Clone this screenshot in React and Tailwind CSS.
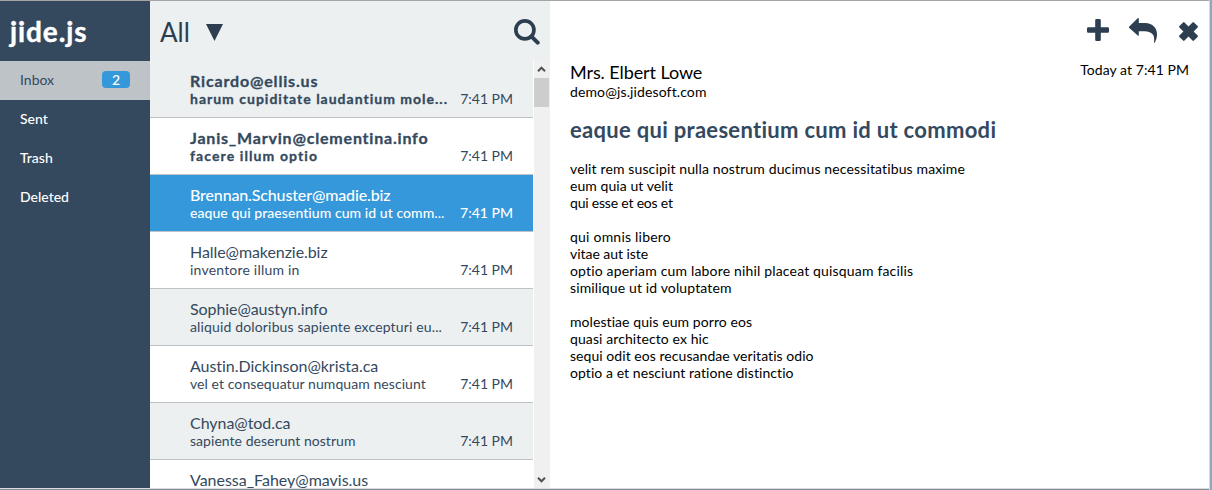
const folders = ['Sent', 'Trash', 'Deleted'];

const messages = [
  { from: 'Ricardo@ellis.us', fromTracking: 'tracking-[0.83px]', subject: 'harum cupiditate laudantium mole...', subjectTracking: 'tracking-[1px]', kind: 'unread', bg: 'bg-[#ecf0f1]' },
  { from: 'Janis_Marvin@clementina.info', fromTracking: 'tracking-[0.8px]', subject: 'facere illum optio', subjectTracking: 'tracking-[1.1px]', kind: 'unread', bg: 'bg-white' },
  { from: 'Brennan.Schuster@madie.biz', fromTracking: 'tracking-[-0.14px]', subject: 'eaque qui praesentium cum id ut comm...', subjectTracking: 'tracking-[0.06px]', kind: 'selected', bg: 'bg-[#3498db]' },
  { from: 'Halle@makenzie.biz', fromTracking: 'tracking-[-0.07px]', subject: 'inventore illum in', subjectTracking: 'tracking-[0.2px]', kind: 'read', bg: 'bg-white' },
  { from: 'Sophie@austyn.info', fromTracking: 'tracking-[-0.08px]', subject: 'aliquid doloribus sapiente excepturi eu...', subjectTracking: 'tracking-[0.15px]', kind: 'read', bg: 'bg-[#ecf0f1]' },
  { from: 'Austin.Dickinson@krista.ca', fromTracking: 'tracking-[-0.04px]', subject: 'vel et consequatur numquam nesciunt', subjectTracking: 'tracking-[0.07px]', kind: 'read', bg: 'bg-white' },
  { from: 'Chyna@tod.ca', fromTracking: 'tracking-[-0.05px]', subject: 'sapiente deserunt nostrum', subjectTracking: 'tracking-[0.04px]', kind: 'read', bg: 'bg-[#ecf0f1]' },
  { from: 'Vanessa_Fahey@mavis.us', fromTracking: 'tracking-[-0.01px]', kind: 'read', bg: 'bg-white' },
];

const kinds = {
  unread: { row: 'text-[#34495e]', weight: 'font-bold [-webkit-text-stroke:0.3px_#34495e]', time: '' },
  selected: { row: 'text-white', weight: 'font-medium', time: 'font-medium' },
  read: { row: 'text-[#34495e]', weight: '', time: '' },
};

const paragraphs = [
  [
    ['velit rem suscipit nulla nostrum ducimus necessitatibus maxime', 'tracking-[0.13px]'],
    ['eum quia ut velit', 'tracking-[0.06px]'],
    ['qui esse et eos et', 'tracking-[-0.2px]'],
  ],
  [
    ['qui omnis libero', 'tracking-[0.22px]'],
    ['vitae aut iste', 'tracking-[-0.04px]'],
    ['optio aperiam cum labore nihil placeat quisquam facilis', 'tracking-[0.17px]'],
    ['similique ut id voluptatem', 'tracking-[0.14px]'],
  ],
  [
    ['molestiae quis eum porro eos', 'tracking-[0.07px]'],
    ['quasi architecto ex hic', 'tracking-[0.1px]'],
    ['sequi odit eos recusandae veritatis odio', 'tracking-[0.05px]'],
    ['optio a et nesciunt ratione distinctio', 'tracking-[0.07px]'],
  ],
];

function Message({ message }) {
  const style = kinds[message.kind];
  return (
    <li className={`flex h-[57px] shrink-0 items-end justify-between border-b border-[#bdc3c7] py-[10px] pr-5 pl-10 ${style.row} ${message.bg}`}>
      <div className={`h-9 whitespace-nowrap ${style.weight}`}>
        <div className={`text-[16px] leading-[19px] ${message.fromTracking}`}>{message.from}</div>
        {message.subject && <div className={`text-[14px] leading-[17px] ${message.subjectTracking}`}>{message.subject}</div>}
      </div>
      {message.subject && <div className={`text-[14px] leading-[17px] whitespace-nowrap ${style.time}`}>7:41 PM</div>}
    </li>
  );
}

function Sidebar() {
  return (
    <nav className="flex w-[150px] shrink-0 flex-col bg-[#34495e] text-[14px] text-white">
      <h1 className="h-[60px] pt-[13px] pl-[10px] text-[28px] leading-[34px] font-bold tracking-[0.9px] [-webkit-text-stroke:0.4px_#ffffff]">jide.js</h1>
      <div className="flex h-[39px] items-center justify-between bg-[#bdc3c7] pr-5 pb-[2px] pl-5 text-[#34495e]">
        <span>Inbox</span>
        <span className="h-[17px] w-7 rounded-[4px] bg-[#3498db] text-center leading-[17px] font-medium text-white">2</span>
      </div>
      {folders.map((name) => (
        <div key={name} className="flex h-[39px] items-center pb-[2px] pl-5 font-medium">{name}</div>
      ))}
    </nav>
  );
}

function MessageList() {
  return (
    <section className="flex w-[400px] shrink-0 flex-col bg-[#ecf0f1]">
      <header className="flex h-[60px] shrink-0 items-center justify-between pt-[2px] pr-[10px] pl-[10px] text-[#2c3e50]">
        <div className="flex items-center">
          <span className="w-[46px] text-[26px] leading-[31px]">All</span>
          <svg width="17" height="17" viewBox="0 0 17 17" fill="currentColor"><path d="M0 0h17L8.5 17z" /></svg>
        </div>
        <svg width="26" height="26" viewBox="0 0 27 27" fill="none" stroke="currentColor">
          <circle cx="11.3" cy="11.3" r="9.4" strokeWidth="3.8" />
          <path d="M18 18l6.6 6.6" strokeWidth="4.2" strokeLinecap="round" />
        </svg>
      </header>
      <div className="flex min-h-0 flex-1">
        <ul className="flex w-[383px] flex-col overflow-hidden">
          {messages.map((m) => <Message key={m.from} message={m} />)}
        </ul>
        <div className="flex flex-1 flex-col items-center border-l border-white bg-[#f0f0f0]">
          <div className="flex h-[17px] w-full items-center justify-center pr-px">
            <svg width="9" height="7" viewBox="0 0 9 7" fill="none" stroke="#505050" strokeWidth="2"><path d="M1 5.2l3.5-3.5L8 5.2" /></svg>
          </div>
          <div className="mr-px h-[29px] w-[15px] bg-[#cdcdcd]" />
          <div className="flex-1" />
          <div className="flex h-[17px] w-full items-center justify-center pr-px">
            <svg width="9" height="7" viewBox="0 0 9 7" fill="none" stroke="#505050" strokeWidth="2"><path d="M1 1.8l3.5 3.5L8 1.8" /></svg>
          </div>
        </div>
      </div>
    </section>
  );
}

function Reader() {
  return (
    <main className="flex min-w-0 flex-1 flex-col bg-white pr-[20px] pl-5 text-[14px] leading-[17px] text-black">
      <header className="-mr-3 flex h-[60px] items-start justify-end text-[#2c3e50]">
        <svg className="mt-[18px]" width="22" height="22" viewBox="0 0 22 22" fill="currentColor">
          <path d="M9.4 0h3.2q1.2 0 1.2 1.2v7h7q1.2 0 1.2 1.2v3.2q0 1.2-1.2 1.2h-7v7q0 1.2-1.2 1.2H9.4q-1.2 0-1.2-1.2v-7h-7Q0 13.8 0 12.6V9.4q0-1.2 1.2-1.2h7v-7Q8.2 0 9.4 0z" />
        </svg>
        <svg className="mt-[17px] ml-5" width="28" height="25" viewBox="0 0 28 25" fill="currentColor">
          <path d="M.3 8.4L8.7.3q1.1-.8 1.1.6v4h6C24 5 28 10 28 16.5c0 3-1 6-2.2 8.1-.4.7-1 .4-.8-.4.5-4.2 0-6.7-1.9-8.4-1.7-1.7-4.1-2.4-7.3-2.5h-6v3.8q0 1.3-1 .5L.3 10Q-.3 9.2.3 8.4z" />
        </svg>
        <svg className="mt-[21px] mr-[3px] ml-[22px]" width="19" height="19" viewBox="0 0 19 19" fill="currentColor">
          <path d="M.4 4.1L4.1.4q.7-.7 1.4 0l4 4 4-4q.7-.7 1.4 0l3.7 3.7q.7.7 0 1.4l-4 4 4 4q.7.7 0 1.4l-3.7 3.7q-.7.7-1.4 0l-4-4-4 4q-.7.7-1.4 0L.4 14.9q-.7-.7 0-1.4l4-4-4-4q-.7-.7 0-1.4z" />
        </svg>
      </header>
      <div className="flex items-start justify-between">
        <div>
          <div className="text-[18px] leading-[22px] tracking-[-0.09px]">Mrs. Elbert Lowe</div>
          <div className="tracking-[0.12px]">demo@js.jidesoft.com</div>
        </div>
        <div className="tracking-[0.06px]">Today at 7:41 PM</div>
      </div>
      <h2 className="mt-[17px] text-[22px] leading-[26px] font-bold tracking-[0.3px] text-[#34495e]">eaque qui praesentium cum id ut commodi</h2>
      <div className="mt-[17px] flex flex-col gap-[17px]">
        {paragraphs.map((lines) => (
          <div key={lines[0][0]}>
            {lines.map(([line, tracking]) => <p key={line} className={tracking}>{line}</p>)}
          </div>
        ))}
      </div>
    </main>
  );
}

export default function App() {
  return (
    <div className="flex h-[490px] w-[1212px] overflow-hidden border-r-2 border-[#91a7c0] bg-white font-['Lato',sans-serif] [font-variant-ligatures:none]">
      <div className="flex min-w-0 flex-1 flex-col border-r border-[#d8d8d8]">
        <div className="h-px shrink-0 bg-[#a5a5a5]" />
        <div className="flex min-h-0 flex-1">
          <Sidebar />
          <MessageList />
          <Reader />
        </div>
        <div className="h-px shrink-0 bg-[#dcdcdc]" />
        <div className="h-px shrink-0 bg-[#7d8b9b]" />
      </div>
    </div>
  );
}
